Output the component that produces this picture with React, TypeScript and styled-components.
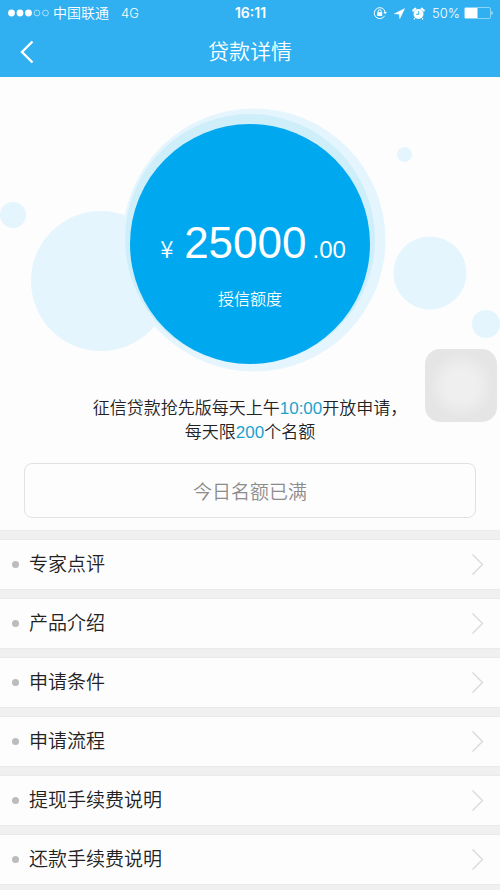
import React from "react";
import styled, { createGlobalStyle } from "styled-components";

const GlobalStyle = createGlobalStyle`
  * { box-sizing: border-box; }
  body {
    margin: 0;
    background: #f0f0f0;
    color: #222;
    font-family: "Liberation Sans", "Noto Sans CJK SC", sans-serif;
    font-weight: 350;
  }
`;

const Page = styled.div`
  min-height: 100vh;
  overflow: hidden;
`;

const Header = styled.header`
  background: #30b0f0;
  color: #fff;
`;

const StatusBar = styled.div`
  display: grid;
  grid-template-columns: 1fr auto 1fr;
  align-items: center;
  height: 26px;
  padding: 0 7px 0 8px;
  font-family: Inter, "Noto Sans CJK SC", sans-serif;
  font-size: 13px;
  line-height: 20px;
`;

const Carrier = styled.div`
  display: flex;
  align-items: center;
  gap: 4px;
`;

const CarrierName = styled.span`
  font-size: 14px;
`;

const Network = styled.span`
  margin-left: 8px;
`;

const Clock = styled.time`
  font-size: 14px;
  font-weight: 600;
`;

const Indicators = styled.div`
  display: flex;
  align-items: center;
  justify-content: flex-end;
  gap: 7px;
`;

const Battery = styled.span`
  display: flex;
  align-items: center;
  gap: 4px;
`;

const NavBar = styled.nav`
  display: grid;
  grid-template-columns: 52px 1fr 52px;
  align-items: center;
  height: 51px;
`;

const BackButton = styled.button`
  display: flex;
  align-items: center;
  height: 48px;
  padding: 0 0 0 20px;
  border: 0;
  background: none;
  color: inherit;
`;

const Title = styled.h1`
  margin: 0;
  font-size: 21px;
  font-weight: 350;
  line-height: 32px;
  text-align: center;
`;

const Hero = styled.section`
  position: relative;
  padding: 0 24px 12px;
  background: #fdfdfd;
  border-bottom: 1px solid #ececec;
`;

const Bubbles = styled.svg`
  position: absolute;
  top: 0;
  left: 0;
  width: 100%;
  height: 312px;
`;

const Credit = styled.div`
  position: relative;
  display: flex;
  flex-direction: column;
  align-items: center;
  height: 320px;
  padding-top: 140px;
  color: #fff;
`;

const Amount = styled.div`
  display: flex;
  align-items: baseline;
  gap: 6px;
  padding-left: 6px;
  font-size: 24px;
  line-height: 52px;
`;

const Currency = styled.span`
  width: 18px;
  font-family: "Noto Sans CJK SC", sans-serif;
`;

const Whole = styled.span`
  font-size: 44px;
`;

const CreditLabel = styled.div`
  margin-top: 12px;
  font-size: 16px;
  line-height: 24px;
`;

const Notice = styled.p`
  margin: 0;
  font-size: 17px;
  line-height: 24px;
  text-align: center;
`;

const Accent = styled.span`
  color: #1ba3cf;
`;

const ApplyButton = styled.button`
  display: block;
  width: 100%;
  height: 55px;
  margin-top: 18px;
  border: 1px solid #e2e2e2;
  border-radius: 8px;
  background: #fdfdfd;
  color: #8c8c8c;
  font: inherit;
  font-size: 19px;
`;

const AssistiveTouch = styled.button`
  position: absolute;
  top: 272px;
  right: 3px;
  width: 72px;
  height: 73px;
  border: 0;
  border-radius: 15px;
  background: radial-gradient(circle, #efefef 0 15px, #ececec 21px, #e8e8e8 28px, #e5e5e5 33px);
`;

const Menu = styled.ul`
  display: flex;
  flex-direction: column;
  gap: 8px;
  margin: 0;
  padding: 8px 0;
  list-style: none;
`;

const MenuLink = styled.a`
  display: flex;
  align-items: center;
  height: 51px;
  padding: 0 16px 0 12px;
  border-top: 1px solid #eaeaea;
  border-bottom: 1px solid #eaeaea;
  background: #fdfdfd;
  color: #222;
  font-size: 19px;
  line-height: 28px;
  text-decoration: none;

  &::before {
    content: "";
    width: 7px;
    height: 7px;
    margin-right: 10px;
    border-radius: 50%;
    background: #bcbcbc;
  }

  svg {
    margin-left: auto;
  }
`;

const sections = ["专家点评", "产品介绍", "申请条件", "申请流程", "提现手续费说明", "还款手续费说明"];

function Signal() {
  return (
    <svg width="41" height="8" viewBox="0 0 41 8" aria-hidden="true">
      {[0, 1, 2, 3, 4].map((i) => (
        <circle
          key={i}
          cx={3.5 + i * 8.5}
          cy="4"
          r={i < 3 ? 3.4 : 2.9}
          fill={i < 3 ? "#fff" : "none"}
          stroke={i < 3 ? "none" : "#b5e4fa"}
          strokeWidth="0.9"
        />
      ))}
    </svg>
  );
}

function RotationLock() {
  return (
    <svg width="14" height="14" viewBox="0 0 14 14" fill="none" stroke="#fff" aria-hidden="true">
      <path d="M11.6 9.8A5.5 5.5 0 1 1 12.2 6.2" />
      <path d="M10.5 6h3.3l-1.6 2.2z" fill="#fff" stroke="none" />
      <rect x="4.2" y="6.2" width="5" height="3.8" fill="#fff" stroke="none" />
      <path d="M5.2 6.5V5.2a1.5 1.5 0 0 1 3 0v1.3" />
    </svg>
  );
}

function LocationArrow() {
  return (
    <svg width="11" height="11" viewBox="0 0 11 11" fill="#fff" aria-hidden="true">
      <path d="M10.8.4.2 5.8l5 .4.5 4.8z" stroke="#fff" strokeWidth=".3" />
    </svg>
  );
}

function Alarm() {
  return (
    <svg width="13" height="13" viewBox="0 0 13 13" fill="none" stroke="#fff" aria-hidden="true">
      <circle cx="6.5" cy="7" r="5" fill="#fff" stroke="none" />
      <path d="M1.2 3.6 3.4 1.6M11.8 3.6 9.6 1.6" strokeWidth="2" strokeLinecap="round" />
      <path d="M2.8 11.2 2 12.4M10.2 11.2l.8 1.2" strokeWidth="1.2" />
      <path d="M6.7 4.2v3.1H4.2" stroke="#30b0f0" />
    </svg>
  );
}

function BatteryIcon() {
  return (
    <svg width="29" height="12" viewBox="0 0 29 12" aria-hidden="true">
      <rect x=".5" y=".5" width="26" height="11" rx="1.5" fill="none" stroke="#8bd5f7" />
      <path d="M1 1h12.5v10H1z" fill="#fff" />
      <path d="M27.5 4c1.4.4 1.4 3.6 0 4z" fill="#d9f2fd" />
    </svg>
  );
}

export default function App() {
  return (
    <Page>
      <GlobalStyle />
      <Header>
        <StatusBar>
          <Carrier>
            <Signal />
            <CarrierName>中国联通</CarrierName>
            <Network>4G</Network>
          </Carrier>
          <Clock>16:11</Clock>
          <Indicators>
            <RotationLock />
            <LocationArrow />
            <Alarm />
            <Battery>
              50%
              <BatteryIcon />
            </Battery>
          </Indicators>
        </StatusBar>
        <NavBar>
          <BackButton aria-label="返回">
            <svg width="14" height="24" viewBox="0 0 14 24" fill="none" stroke="#fff" strokeWidth="2.4" aria-hidden="true">
              <path d="M12.5 1.5 2 12l10.5 10.5" />
            </svg>
          </BackButton>
          <Title>贷款详情</Title>
        </NavBar>
      </Header>

      <main>
        <Hero>
          <Bubbles viewBox="0 0 500 312" aria-hidden="true">
            <g fill="#e4f5fe">
              <circle cx="13" cy="138" r="13" />
              <circle cx="101" cy="204" r="70" />
              <circle cx="404.5" cy="77.5" r="7.5" />
              <circle cx="430" cy="196" r="36.5" />
              <circle cx="486" cy="247" r="14" />
              <circle cx="254" cy="163" r="131.5" />
            </g>
            <circle cx="250" cy="162" r="125" fill="#ceeffa" />
            <circle cx="250" cy="167" r="120" fill="#00a8ef" />
          </Bubbles>
          <Credit>
            <Amount>
              <Currency>¥</Currency>
              <Whole>25000</Whole>
              <span>.00</span>
            </Amount>
            <CreditLabel>授信额度</CreditLabel>
          </Credit>
          <Notice>
            征信贷款抢先版每天上午<Accent>10:00</Accent>开放申请，
            <br />
            每天限<Accent>200</Accent>个名额
          </Notice>
          <ApplyButton>今日名额已满</ApplyButton>
          <AssistiveTouch aria-label="AssistiveTouch" />
        </Hero>

        <Menu>
          {sections.map((name) => (
            <li key={name}>
              <MenuLink href="#">
                {name}
                <svg width="13" height="21" viewBox="0 0 13 21" fill="none" stroke="#d8d8d8" strokeWidth="1.3" aria-hidden="true">
                  <path d="M1.5 .5 11.5 10.5 1.5 20.5" />
                </svg>
              </MenuLink>
            </li>
          ))}
        </Menu>
      </main>
    </Page>
  );
}
